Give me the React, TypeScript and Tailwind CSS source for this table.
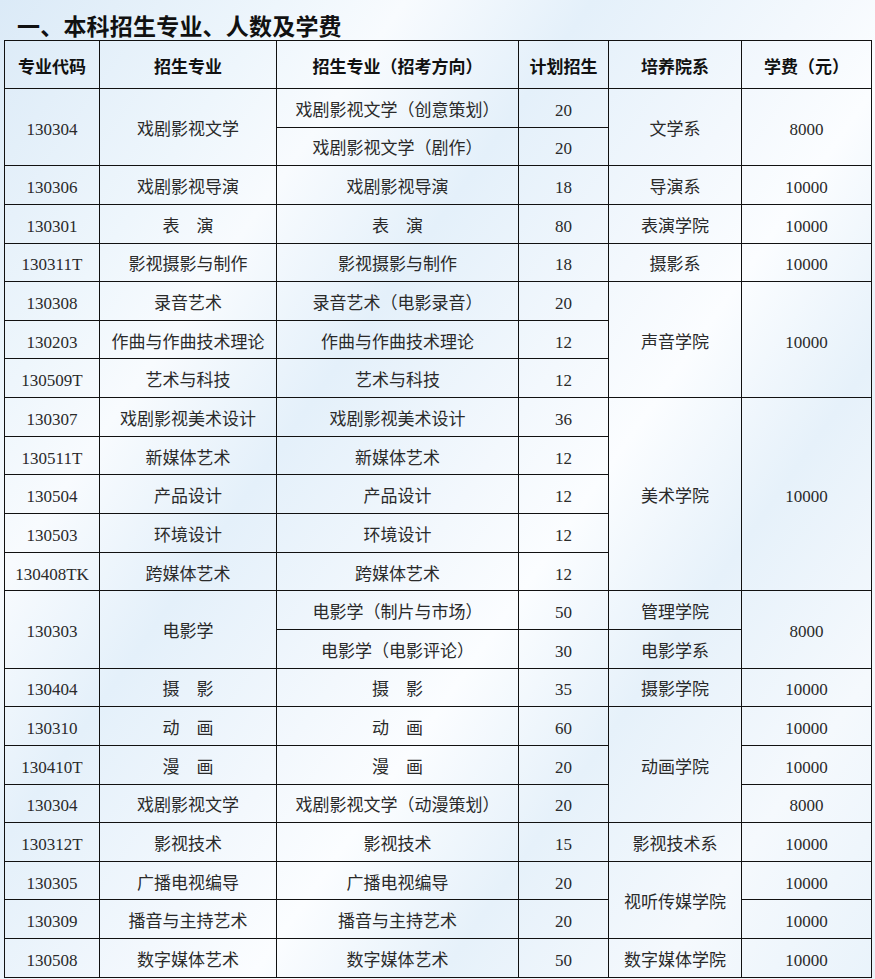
import React from "react";

type Cell = { t: string; rs?: number };
type Row = Cell[];

const serif = "font-['Liberation_Serif','Noto_Sans_CJK_SC',serif]";

const rows: Row[] = [
  [{ t: "130304", rs: 2 }, { t: "戏剧影视文学", rs: 2 }, { t: "戏剧影视文学（创意策划）" }, { t: "20" }, { t: "文学系", rs: 2 }, { t: "8000", rs: 2 }],
  [{ t: "戏剧影视文学（剧作）" }, { t: "20" }],
  [{ t: "130306" }, { t: "戏剧影视导演" }, { t: "戏剧影视导演" }, { t: "18" }, { t: "导演系" }, { t: "10000" }],
  [{ t: "130301" }, { t: "表\u3000演" }, { t: "表\u3000演" }, { t: "80" }, { t: "表演学院" }, { t: "10000" }],
  [{ t: "130311T" }, { t: "影视摄影与制作" }, { t: "影视摄影与制作" }, { t: "18" }, { t: "摄影系" }, { t: "10000" }],
  [{ t: "130308" }, { t: "录音艺术" }, { t: "录音艺术（电影录音）" }, { t: "20" }, { t: "声音学院", rs: 3 }, { t: "10000", rs: 3 }],
  [{ t: "130203" }, { t: "作曲与作曲技术理论" }, { t: "作曲与作曲技术理论" }, { t: "12" }],
  [{ t: "130509T" }, { t: "艺术与科技" }, { t: "艺术与科技" }, { t: "12" }],
  [{ t: "130307" }, { t: "戏剧影视美术设计" }, { t: "戏剧影视美术设计" }, { t: "36" }, { t: "美术学院", rs: 5 }, { t: "10000", rs: 5 }],
  [{ t: "130511T" }, { t: "新媒体艺术" }, { t: "新媒体艺术" }, { t: "12" }],
  [{ t: "130504" }, { t: "产品设计" }, { t: "产品设计" }, { t: "12" }],
  [{ t: "130503" }, { t: "环境设计" }, { t: "环境设计" }, { t: "12" }],
  [{ t: "130408TK" }, { t: "跨媒体艺术" }, { t: "跨媒体艺术" }, { t: "12" }],
  [{ t: "130303", rs: 2 }, { t: "电影学", rs: 2 }, { t: "电影学（制片与市场）" }, { t: "50" }, { t: "管理学院" }, { t: "8000", rs: 2 }],
  [{ t: "电影学（电影评论）" }, { t: "30" }, { t: "电影学系" }],
  [{ t: "130404" }, { t: "摄\u3000影" }, { t: "摄\u3000影" }, { t: "35" }, { t: "摄影学院" }, { t: "10000" }],
  [{ t: "130310" }, { t: "动\u3000画" }, { t: "动\u3000画" }, { t: "60" }, { t: "动画学院", rs: 3 }, { t: "10000" }],
  [{ t: "130410T" }, { t: "漫\u3000画" }, { t: "漫\u3000画" }, { t: "20" }, { t: "10000" }],
  [{ t: "130304" }, { t: "戏剧影视文学" }, { t: "戏剧影视文学（动漫策划）" }, { t: "20" }, { t: "8000" }],
  [{ t: "130312T" }, { t: "影视技术" }, { t: "影视技术" }, { t: "15" }, { t: "影视技术系" }, { t: "10000" }],
  [{ t: "130305" }, { t: "广播电视编导" }, { t: "广播电视编导" }, { t: "20" }, { t: "视听传媒学院", rs: 2 }, { t: "10000" }],
  [{ t: "130309" }, { t: "播音与主持艺术" }, { t: "播音与主持艺术" }, { t: "20" }, { t: "10000" }],
  [{ t: "130508" }, { t: "数字媒体艺术" }, { t: "数字媒体艺术" }, { t: "50" }, { t: "数字媒体学院" }, { t: "10000" }],
];

const headers = ["专业代码", "招生专业", "招生专业（招考方向）", "计划招生", "培养院系", "学费（元）"];

export default function App() {
  return (
    <div className="w-[875px] h-[979px] overflow-hidden bg-[linear-gradient(125deg,#dbeaf7_0%,#eef6fc_18%,#f8fbfe_26%,#e4f0fa_38%,#f3f8fd_52%,#fbfdff_60%,#e6f1fa_72%,#f5f9fd_86%,#e9f3fb_100%)] text-[#2a2a2a]">
      <div className="h-[40px] pl-[17px] pt-[11px] text-[23px] leading-[28px] font-bold text-[#111] font-['Noto_Sans_CJK_SC',sans-serif] tracking-[0.2px]">
        一、本科招生专业、人数及学费
      </div>
      <table className="ml-[4px] w-[867px] table-fixed border-collapse border border-[#111]">
        <colgroup>
          <col className="w-[95px]" />
          <col className="w-[177px]" />
          <col className="w-[242px]" />
          <col className="w-[90px]" />
          <col className="w-[133px]" />
          <col className="w-[130px]" />
        </colgroup>
        <thead>
          <tr className="h-[48px]">
            {headers.map((h) => (
              <th
                key={h}
                className="border border-[#111] p-0 pt-[2px] text-center align-middle text-[17px] font-bold text-[#111] font-['Noto_Sans_CJK_SC',sans-serif] leading-[22px]"
              >
                {h}
              </th>
            ))}
          </tr>
        </thead>
        <tbody>
          {rows.map((r, i) => (
            <tr key={i} className="h-[38.65px]">
              {r.map((c, j) => (
                <td
                  key={j}
                  rowSpan={c.rs}
                  className={`border border-[#111] p-0 pt-[6px] text-center align-middle whitespace-nowrap text-[17px] leading-[22px] ${serif}`}
                >
                  {c.t}
                </td>
              ))}
            </tr>
          ))}
        </tbody>
      </table>
    </div>
  );
}
